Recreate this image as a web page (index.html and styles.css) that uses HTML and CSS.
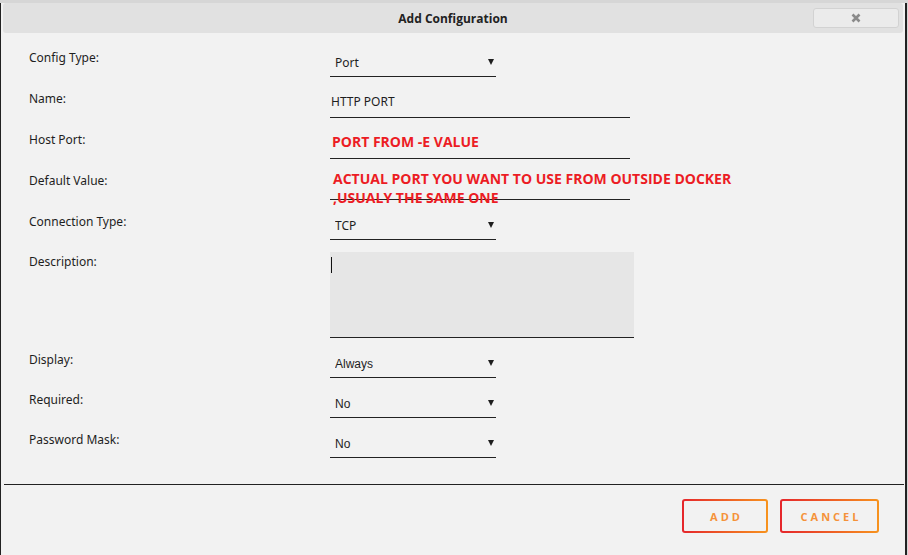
FILE: index.html
```html
<!DOCTYPE html>
<html>

<head>
    <meta charset="utf-8">
    <title>Add Configuration</title>
    <link rel="stylesheet" href="styles.css">
</head>

<body>
    <div class="dialog">
        <div class="titlebar">
            <span></span>
            <div class="title">Add Configuration</div>
            <button class="close" type="button">
                <svg width="10" height="10" viewBox="0 0 10 10">
                    <path d="M1.5 1.5 L8.5 8.5 M8.5 1.5 L1.5 8.5" stroke="#8a8a8a" stroke-width="2.6" stroke-linecap="butt"/>
                </svg>
            </button>
        </div>

        <form class="form">
            <div class="row r41">
                <label>Config Type:</label>
                <div class="select"><select class="sans"><option>Port</option></select></div>
            </div>
            <div class="row r41">
                <label>Name:</label>
                <div class="field"><input type="text" value="HTTP PORT"></div>
            </div>
            <div class="row r41">
                <label>Host Port:</label>
                <div class="field">
                    <input type="text" value="">
                    <div class="note note-host">PORT FROM -E VALUE</div>
                </div>
            </div>
            <div class="row r41">
                <label>Default Value:</label>
                <div class="field">
                    <input type="text" value="">
                    <div class="note note-default">ACTUAL PORT YOU WANT TO USE FROM OUTSIDE DOCKER<br>,USUALY THE SAME ONE</div>
                </div>
            </div>
            <div class="row r40">
                <label>Connection Type:</label>
                <div class="select"><select class="sans"><option>TCP</option></select></div>
            </div>
            <div class="row desc">
                <label>Description:</label>
                <div class="area">
                    <textarea></textarea>
                    <span class="caret"></span>
                </div>
            </div>
            <div class="row r40">
                <label>Display:</label>
                <div class="select"><select><option>Always</option></select></div>
            </div>
            <div class="row r40">
                <label>Required:</label>
                <div class="select"><select><option>No</option></select></div>
            </div>
            <div class="row r40">
                <label>Password Mask:</label>
                <div class="select"><select><option>No</option></select></div>
            </div>
        </form>

        <div class="footer">
            <button class="btn btn-add" type="button"><span>ADD</span></button>
            <button class="btn btn-cancel" type="button"><span>CANCEL</span></button>
        </div>
    </div>
</body>

</html>
```

FILE: styles.css
```css
* {
    margin: 0;
    padding: 0;
    box-sizing: border-box;
}

body {
    width: 908px;
    height: 555px;
    overflow: hidden;
    background: #d6d6d6;
    font-family: "Noto Sans", "Open Sans", sans-serif;
    color: #1e1e1e;
}

.dialog {
    width: 907px;
    height: 554px;
    background: #f2f2f2;
    border-left: 1px solid #222222;
    border-right: 2px solid #222222;
    border-bottom: 2px solid #222222;
    border-bottom-left-radius: 2px;
    border-bottom-right-radius: 2px;
}

/* title bar */

.titlebar {
    margin: 3px 2px 0 2px;
    height: 30px;
    background: #e1e1e1;
    border-radius: 3px;
    display: grid;
    grid-template-columns: 1fr auto 1fr;
    align-items: center;
}

.title {
    font-family: "Open Sans", "Noto Sans", sans-serif;
    font-weight: bold;
    font-size: 12px;
    color: #222222;
}

.close {
    justify-self: end;
    margin-right: 4px;
    width: 86px;
    height: 20px;
    background: #ebebeb;
    border: 1px solid #d2d2d2;
    border-radius: 3px;
    display: flex;
    align-items: center;
    justify-content: center;
}

/* form rows */

.form {
    margin-top: 3px;
}

.row {
    display: grid;
    grid-template-columns: 329px 1fr;
    align-items: end;
}

.r41 {
    height: 41px;
}

.r40 {
    height: 40px;
}

.desc {
    height: 98px;
}

.row label {
    align-self: start;
    padding: 14px 0 0 28px;
    font-size: 12px;
    line-height: 16px;
}

.select {
    width: 166px;
    position: relative;
}

.select select {
    width: 100%;
    height: 30px;
    appearance: none;
    -webkit-appearance: none;
    background: transparent;
    border: none;
    border-bottom: 1px solid #222222;
    border-radius: 0;
    padding: 2px 0 0 5px;
    font-family: "Liberation Sans", Arial, sans-serif;
    font-size: 12px;
    color: #1e1e1e;
    outline: none;
}

.select select.sans {
    font-family: "Noto Sans", sans-serif;
}

.select::after {
    content: "";
    position: absolute;
    right: 2px;
    top: 12px;
    border-left: 3px solid transparent;
    border-right: 3px solid transparent;
    border-top: 6px solid #1e1e1e;
}

.field {
    width: 300px;
    position: relative;
}

.field input {
    width: 100%;
    height: 30px;
    background: transparent;
    border: none;
    border-bottom: 1px solid #222222;
    padding: 0 0 2px 1px;
    font-family: "Noto Sans", sans-serif;
    font-size: 12px;
    color: #1e1e1e;
    outline: none;
}

/* red notes painted over the fields */

.note {
    position: absolute;
    left: 2px;
    white-space: nowrap;
    font-family: "Open Sans", "Noto Sans", sans-serif;
    font-weight: bold;
    font-size: 14px;
    line-height: 19px;
    color: #ec1c24;
}

.note-host {
    top: 3px;
}

.note-default {
    left: 3px;
    top: -1px;
}

.area {
    width: 304px;
    position: relative;
}

.area textarea {
    display: block;
    width: 100%;
    height: 86px;
    background: #e6e6e6;
    border: none;
    border-bottom: 1px solid #222222;
    resize: none;
    outline: none;
}

.caret {
    position: absolute;
    left: 1px;
    top: 5px;
    width: 1px;
    height: 16px;
    background: #111111;
}

/* footer */

.footer {
    margin: 26px 1px 0 3px;
    border-top: 1px solid #222222;
    padding: 14px 25px 0 0;
    display: flex;
    justify-content: flex-end;
    gap: 12px;
}

.btn {
    height: 34px;
    border: 2px solid transparent;
    border-radius: 3px;
    background: linear-gradient(#f2f2f2, #f2f2f2) padding-box,
        linear-gradient(90deg, #e5262c, #f7931e) border-box;
    font-family: "Open Sans", "Noto Sans", sans-serif;
    font-weight: bold;
    font-size: 11px;
    letter-spacing: 3px;
    color: #f5923a;
}

.btn span {
    padding-left: 3px;
}

.btn-add {
    width: 86px;
}

.btn-cancel {
    width: 99px;
}
```
